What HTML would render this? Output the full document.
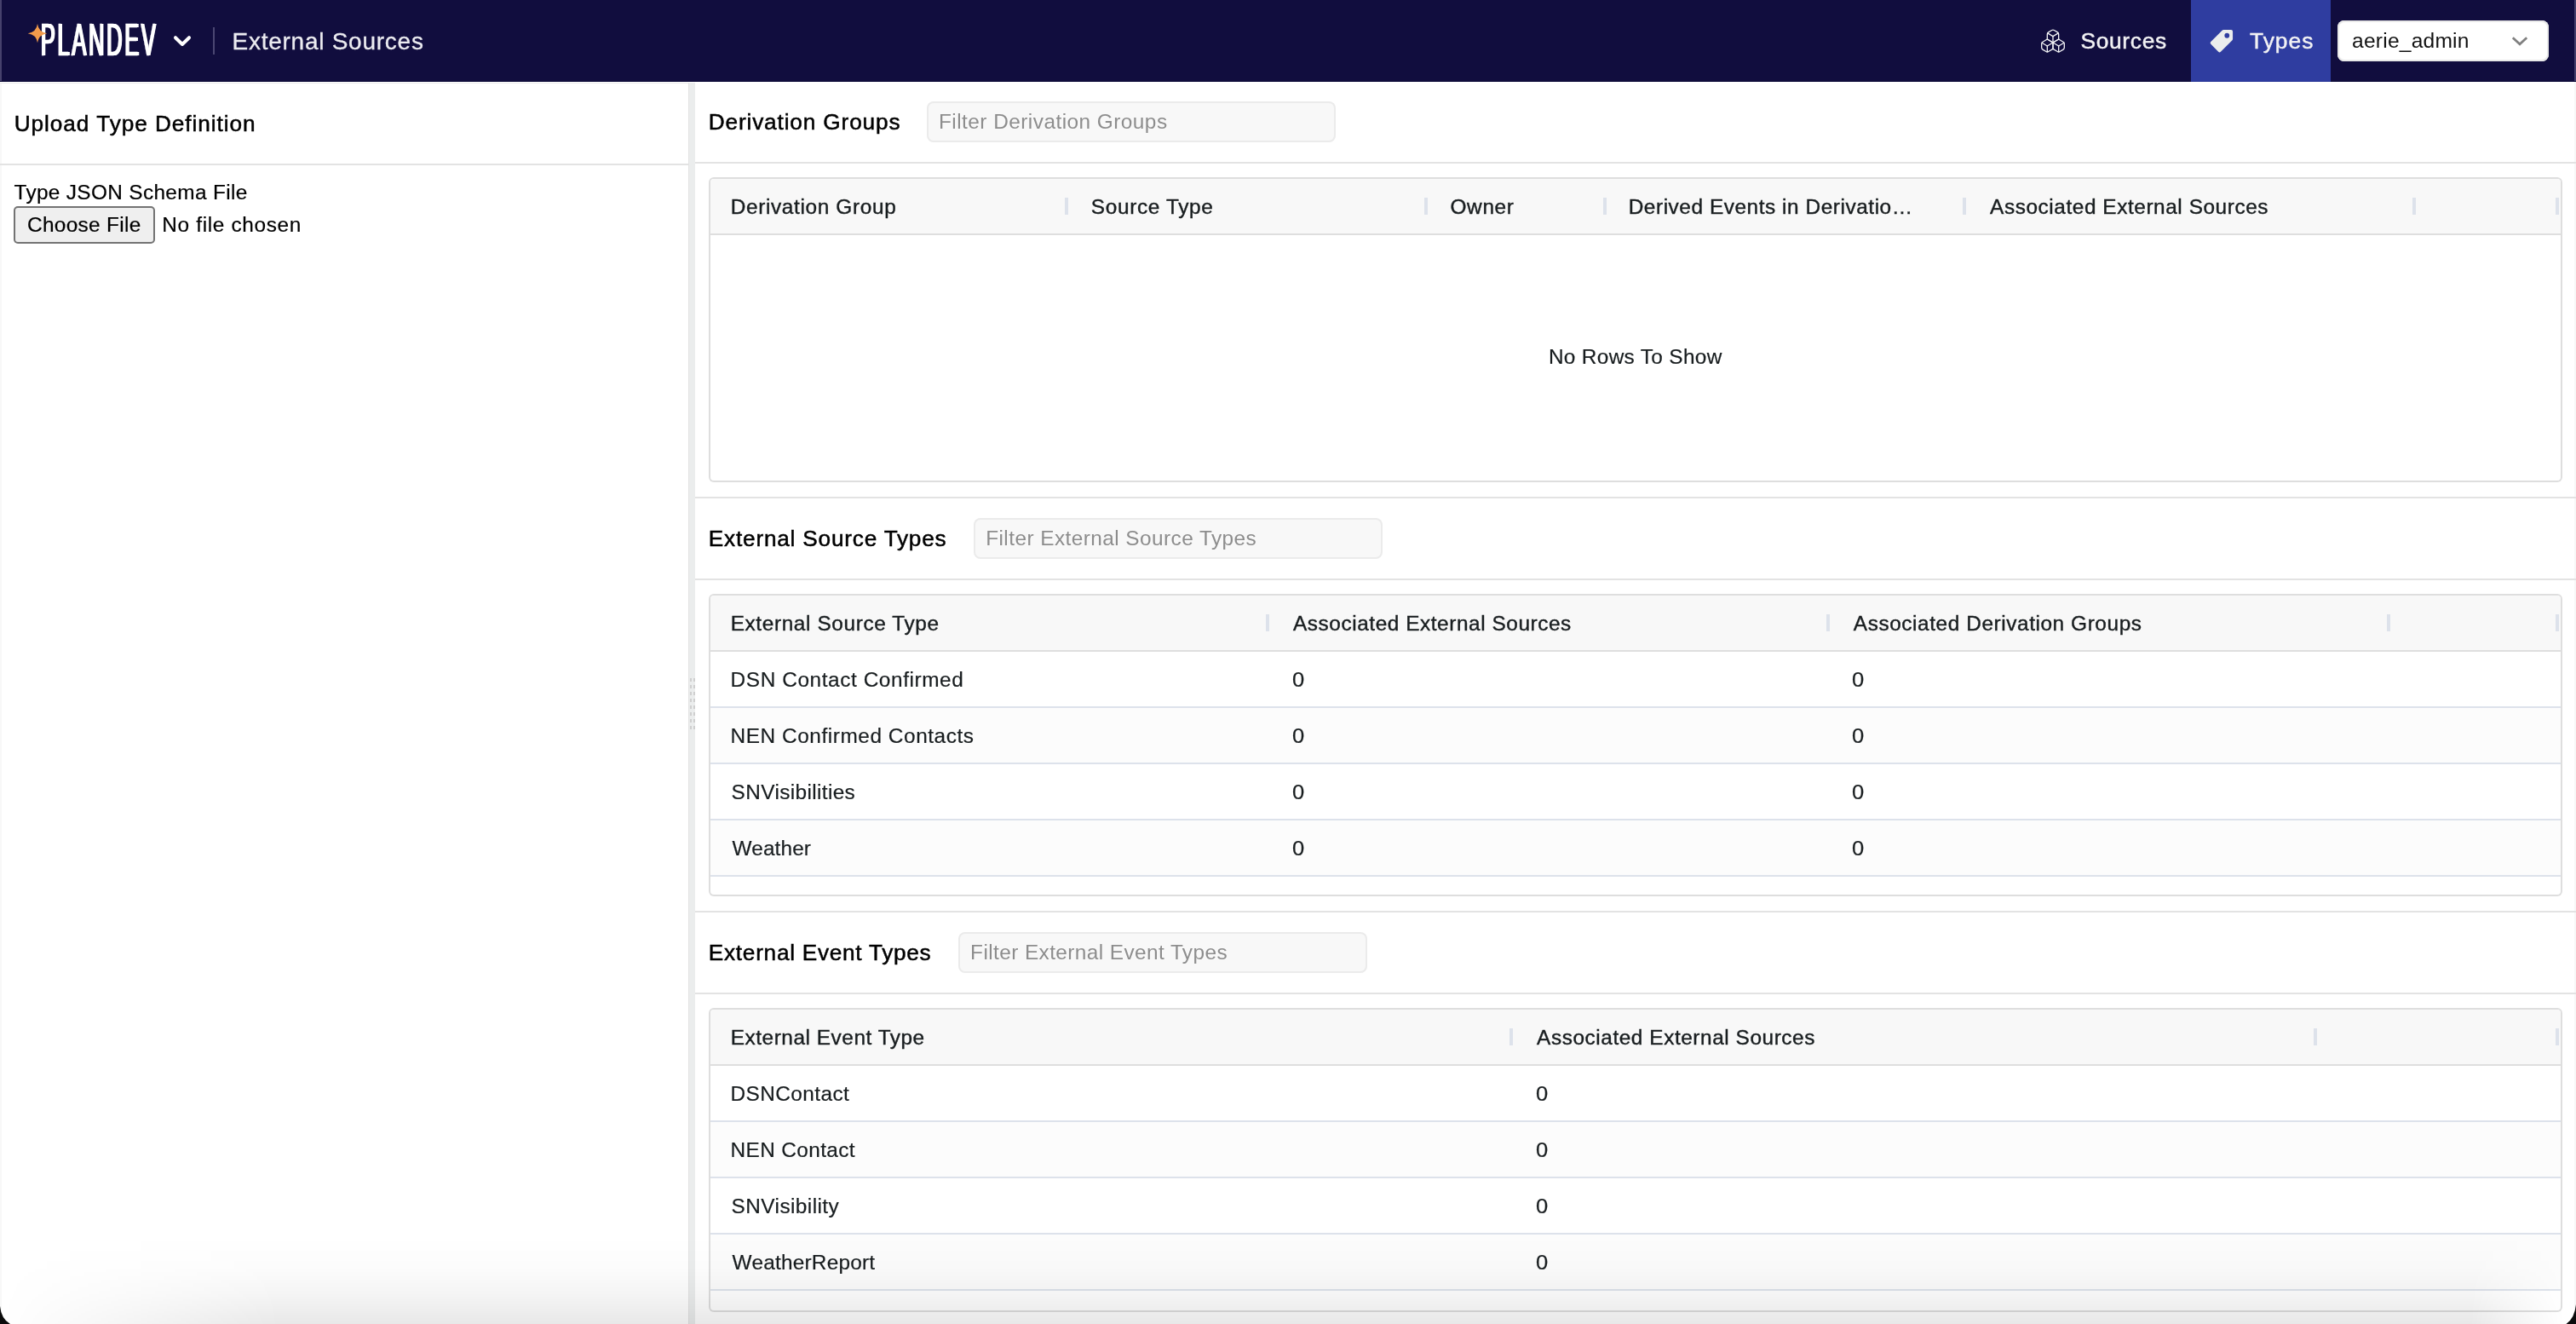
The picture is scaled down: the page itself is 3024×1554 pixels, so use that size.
<!DOCTYPE html>
<html lang="en">
<head>
<meta charset="utf-8">
<title>External Sources</title>
<style>
html,body{margin:0;padding:0;}
body{width:3024px;height:1554px;position:relative;overflow:hidden;background:#fff;will-change:transform;font-family:"Liberation Sans",sans-serif;}
.r{position:absolute;box-sizing:border-box;}
.t{position:absolute;margin:0;padding:0;white-space:pre;line-height:1em;font-weight:400;font-style:normal;text-decoration:none;font-family:"Liberation Sans",sans-serif;}
svg{position:absolute;overflow:visible;}
</style>
</head>
<body>
<header>
<div class="r" style="left:0px;top:0px;width:3024px;height:96px;background:#110d3e;"></div>
<div class="r" style="left:0px;top:0px;width:2px;height:96px;background:#46416c;"></div>
<div class="r" style="left:3022px;top:0px;width:2px;height:96px;background:#443f6a;"></div>
<div class="r" style="left:2572px;top:0px;width:164px;height:96px;background:#2f3da0;"></div>
<div class="r" style="left:0px;top:95px;width:3024px;height:1px;background:#03002f;"></div>
<div class="r" style="left:2572px;top:95px;width:164px;height:1px;background:#1f2e93;"></div>
<div class="brand">
<span class="t" id="logo" style="left:46.9px;top:19.9px;font-size:54.4px;font-weight:400;color:#fff;letter-spacing:5.6px;-webkit-text-stroke:0.5px #fff;text-shadow:1.3px 0 0 #fff,2.6px 0 0 #fff,3.7px 0 0 #fff;transform-origin:0 0;transform:scaleX(0.47);">PLANDEV</span>
<svg style="left:30px;top:25px" width="28" height="28" viewBox="30 25 28 28"><path d="M44 28.1 Q45.3 37.9 55.3 39.2 Q45.3 40.5 44 50.3 Q42.7 40.5 32.7 39.2 Q42.7 37.9 44 28.1Z" fill="#f19a4b"/></svg>
<svg style="left:200px;top:38px" width="28" height="20" viewBox="200 38 28 20"><polyline points="206,44.2 214,52 222,44.2" fill="none" stroke="#fff" stroke-width="4" stroke-linecap="round" stroke-linejoin="round"/></svg>
</div>
<div class="r" style="left:250px;top:32px;width:2px;height:32px;background:#4b4772;"></div>
<h1 class="t" id="nav_title" style="left:272.50px;top:35.30px;font-size:28px;color:#ececf1;letter-spacing:0.745px;-webkit-text-stroke:0.3px #ececf1;">External Sources</h1>
<nav>
<svg style="left:2394px;top:32px" width="32" height="32" viewBox="0 0 24 24" fill="none" stroke="#f2f2f5" stroke-width="1" stroke-linecap="round" stroke-linejoin="round"><path d="M2.97 12.92A2 2 0 0 0 2 14.63v3.24a2 2 0 0 0 .97 1.71l3 1.8a2 2 0 0 0 2.06 0L12 19v-5.5l-5-3-4.03 2.42Z"/><path d="m7 16.5-4.74-2.85"/><path d="m7 16.5 5-3"/><path d="M7 16.5v5.17"/><path d="M12 13.5V19l3.97 2.38a2 2 0 0 0 2.06 0l3-1.8a2 2 0 0 0 .97-1.71v-3.24a2 2 0 0 0-.97-1.71L17 10.5l-5 3Z"/><path d="m17 16.5-5-3"/><path d="m17 16.5 4.74-2.85"/><path d="M17 16.5v5.17"/><path d="M7.97 4.42A2 2 0 0 0 7 6.13v4.37l5 3 5-3V6.13a2 2 0 0 0-.97-1.71l-3-1.8a2 2 0 0 0-2.06 0l-3 1.8Z"/><path d="M12 8 7.26 5.15"/><path d="m12 8 4.74-2.85"/><path d="M12 13.5V8"/></svg>
<a class="t" id="nav_sources" style="left:2442.40px;top:35.12px;font-size:26.4px;color:#f2f2f4;letter-spacing:0.663px;-webkit-text-stroke:0.45px #f2f2f4;">Sources</a>
<svg style="left:2592px;top:32.9px" width="31" height="31" viewBox="0 0 16 16"><g transform="translate(16,0) scale(-1,1)"><path fill="#ebeded" d="M2 1a1 1 0 0 0-1 1v4.586a1 1 0 0 0 .293.707l7 7a1 1 0 0 0 1.414 0l4.586-4.586a1 1 0 0 0 0-1.414l-7-7A1 1 0 0 0 6.586 1H2zm4 3.5a1.5 1.5 0 1 1-3 0 1.5 1.5 0 0 1 3 0z"/></g></svg>
<a class="t" id="nav_types" aria-current="page" style="left:2641.00px;top:35.05px;font-size:26.4px;color:#f2f2f4;letter-spacing:1.000px;-webkit-text-stroke:0.45px #f2f2f4;">Types</a>
</nav>
<div role="combobox" aria-label="User role">
<div class="r" style="left:2744px;top:24px;width:248px;height:48px;background:#fff;border-radius:8px;box-shadow:inset 0 0 0 2px #e9e9e9;"></div>
<span class="t" id="nav_user" style="left:2761.10px;top:35.58px;font-size:24.6px;color:#111;letter-spacing:0.200px;">aerie_admin</span>
<svg style="left:2944px;top:38px" width="28" height="20" viewBox="2944 38 28 20"><polyline points="2949.8,44.2 2958,51.8 2966.2,44.2" fill="none" stroke="#808080" stroke-width="2.7" stroke-linecap="butt" stroke-linejoin="miter"/></svg>
</div>
</header>
<aside>
<div class="r" style="left:0px;top:98px;width:2px;height:1456px;background:#f8f8f8;"></div>
<div class="r" style="left:0px;top:96.5px;width:808px;height:1.5px;background:#e9e9e9;"></div>
<div class="r" style="left:0px;top:192px;width:808px;height:2px;background:#e3e3e3;"></div>
<h2 class="t" id="l_title" style="left:16.70px;top:132.36px;font-size:26.2px;color:#000;letter-spacing:0.951px;-webkit-text-stroke:0.5px #000;">Upload Type Definition</h2>
<label class="t" id="l_label" style="left:16.50px;top:213.55px;font-size:24.4px;color:#000;letter-spacing:0.335px;-webkit-text-stroke:0.2px #000;">Type JSON Schema File</label>
<div class="r" style="left:16px;top:242px;width:166px;height:44px;background:#efefef;border-radius:5px;box-shadow:inset 0 0 0 2px #737373;"></div>
<span class="t" id="l_btn" role="button" style="left:32.10px;top:252.18px;font-size:24.4px;color:#000;letter-spacing:0.300px;-webkit-text-stroke:0.2px #000;">Choose File</span>
<span class="t" id="l_nofile" style="left:190.30px;top:252.15px;font-size:24.4px;color:#000;letter-spacing:0.658px;-webkit-text-stroke:0.2px #000;">No file chosen</span>
</aside>
<div role="separator" aria-orientation="vertical">
<div class="r" style="left:808px;top:97px;width:8px;height:1457px;background:#ebeded;"></div>
<div class="r" style="left:808px;top:97px;width:1px;height:1457px;background:#e3e3e3;"></div>
<svg style="left:808px;top:790px" width="8" height="72" viewBox="808 790 8 72" fill="#cfcfcf"><rect x="810" y="796" width="2" height="4"/><rect x="814" y="796" width="2" height="4"/><rect x="810" y="804" width="2" height="4"/><rect x="814" y="804" width="2" height="4"/><rect x="810" y="812" width="2" height="4"/><rect x="814" y="812" width="2" height="4"/><rect x="810" y="820" width="2" height="4"/><rect x="814" y="820" width="2" height="4"/><rect x="810" y="828" width="2" height="4"/><rect x="814" y="828" width="2" height="4"/><rect x="810" y="836" width="2" height="4"/><rect x="814" y="836" width="2" height="4"/><rect x="810" y="844" width="2" height="4"/><rect x="814" y="844" width="2" height="4"/><rect x="810" y="852" width="2" height="4"/><rect x="814" y="852" width="2" height="4"/></svg>
</div>
<main>
<div class="r" style="left:3022px;top:96px;width:2px;height:1458px;background:#f7f7f7;"></div>
<section>
<div class="r" style="left:816px;top:190px;width:2208px;height:2px;background:#e3e3e3;"></div>
<h2 class="t" id="s1_title" style="left:831.70px;top:130.32px;font-size:26.2px;color:#000;letter-spacing:0.861px;-webkit-text-stroke:0.5px #000;">Derivation Groups</h2>
<div class="r" role="searchbox" style="left:1088px;top:119px;width:480px;height:48px;background:#f8f8f8;border-radius:8px;box-shadow:inset 0 0 0 2px #ebebeb;"></div>
<span class="t" id="s1_ph" style="left:1102.00px;top:131.15px;font-size:24.4px;color:#8d8d8d;letter-spacing:0.458px;">Filter Derivation Groups</span>
<div role="grid" aria-label="Derivation Groups">
<div class="r" style="left:832px;top:208px;width:2176px;height:358px;border-radius:6px;background:#fff;box-shadow:inset 0 0 0 2px #dedede;overflow:hidden;">
<div class="r" style="left:2px;top:2px;width:2172px;height:64px;background:#f8f8f8;border-radius:4px 4px 0 0;"></div>
<div class="r" style="left:2px;top:66px;width:2172px;height:2px;background:#dedede;"></div>
<div class="r" style="left:418px;top:24px;width:4px;height:20px;background:#dde2eb;"></div>
<div class="r" style="left:840px;top:24px;width:4px;height:20px;background:#dde2eb;"></div>
<div class="r" style="left:1050px;top:24px;width:4px;height:20px;background:#dde2eb;"></div>
<div class="r" style="left:1472px;top:24px;width:4px;height:20px;background:#dde2eb;"></div>
<div class="r" style="left:2000px;top:24px;width:4px;height:20px;background:#dde2eb;"></div>
<div class="r" style="left:2168px;top:24px;width:4px;height:20px;background:#dde2eb;"></div>
</div>
<div role="row">
<span class="t" id="t1_h1" role="columnheader" style="left:857.70px;top:230.95px;font-size:24.4px;color:#181d1f;letter-spacing:0.643px;-webkit-text-stroke:0.4px #181d1f;">Derivation Group</span>
<span class="t" id="t1_h2" role="columnheader" style="left:1280.80px;top:230.97px;font-size:24.4px;color:#181d1f;letter-spacing:0.660px;-webkit-text-stroke:0.4px #181d1f;">Source Type</span>
<span class="t" id="t1_h3" role="columnheader" style="left:1702.50px;top:230.98px;font-size:24.4px;color:#181d1f;letter-spacing:0.650px;-webkit-text-stroke:0.4px #181d1f;">Owner</span>
<span class="t" id="t1_h4" role="columnheader" style="left:1911.70px;top:230.95px;font-size:24.4px;color:#181d1f;letter-spacing:0.551px;-webkit-text-stroke:0.4px #181d1f;">Derived Events in Derivatio…</span>
<span class="t" id="t1_h5" role="columnheader" style="left:2336.10px;top:230.95px;font-size:24.4px;color:#181d1f;letter-spacing:0.560px;-webkit-text-stroke:0.4px #181d1f;">Associated External Sources</span>
</div>
<span class="t" id="t1_empty" style="left:1817.90px;top:406.75px;font-size:24.4px;color:#181d1f;letter-spacing:0.326px;-webkit-text-stroke:0.2px #181d1f;">No Rows To Show</span>
</div>
<div class="r" style="left:816px;top:583px;width:2208px;height:2px;background:#e3e3e3;"></div>
</section>
<section>
<div class="r" style="left:816px;top:679px;width:2208px;height:2px;background:#e3e3e3;"></div>
<h2 class="t" id="s2_title" style="left:831.80px;top:619.32px;font-size:26.2px;color:#000;letter-spacing:0.795px;-webkit-text-stroke:0.5px #000;">External Source Types</h2>
<div class="r" role="searchbox" style="left:1143px;top:608px;width:480px;height:48px;background:#f8f8f8;border-radius:8px;box-shadow:inset 0 0 0 2px #ebebeb;"></div>
<span class="t" id="s2_ph" style="left:1157.20px;top:620.15px;font-size:24.4px;color:#8d8d8d;letter-spacing:0.432px;">Filter External Source Types</span>
<div role="grid" aria-label="External Source Types">
<div class="r" style="left:832px;top:697px;width:2176px;height:355px;border-radius:6px;background:#fff;box-shadow:inset 0 0 0 2px #dedede;overflow:hidden;">
<div class="r" style="left:2px;top:2px;width:2172px;height:64px;background:#f8f8f8;border-radius:4px 4px 0 0;"></div>
<div class="r" style="left:2px;top:66px;width:2172px;height:2px;background:#dedede;"></div>
<div class="r" style="left:654px;top:24px;width:4px;height:20px;background:#dde2eb;"></div>
<div class="r" style="left:1312px;top:24px;width:4px;height:20px;background:#dde2eb;"></div>
<div class="r" style="left:1970px;top:24px;width:4px;height:20px;background:#dde2eb;"></div>
<div class="r" style="left:2168px;top:24px;width:4px;height:20px;background:#dde2eb;"></div>
<div class="r" style="left:2px;top:68px;width:2172px;height:64px;background:#fff;"></div>
<div class="r" style="left:2px;top:132px;width:2172px;height:2px;background:#dde2eb;"></div>
<div class="r" style="left:2px;top:134px;width:2172px;height:64px;background:#fcfcfc;"></div>
<div class="r" style="left:2px;top:198px;width:2172px;height:2px;background:#dde2eb;"></div>
<div class="r" style="left:2px;top:200px;width:2172px;height:64px;background:#fff;"></div>
<div class="r" style="left:2px;top:264px;width:2172px;height:2px;background:#dde2eb;"></div>
<div class="r" style="left:2px;top:266px;width:2172px;height:64px;background:#fcfcfc;"></div>
<div class="r" style="left:2px;top:330px;width:2172px;height:2px;background:#dde2eb;"></div>
</div>
<div role="row">
<span class="t" id="t2_h1" role="columnheader" style="left:857.70px;top:719.95px;font-size:24.4px;color:#181d1f;letter-spacing:0.610px;-webkit-text-stroke:0.4px #181d1f;">External Source Type</span>
<span class="t" id="t2_h2" role="columnheader" style="left:1518.00px;top:719.95px;font-size:24.4px;color:#181d1f;letter-spacing:0.556px;-webkit-text-stroke:0.4px #181d1f;">Associated External Sources</span>
<span class="t" id="t2_h3" role="columnheader" style="left:2175.80px;top:719.95px;font-size:24.4px;color:#181d1f;letter-spacing:0.575px;-webkit-text-stroke:0.4px #181d1f;">Associated Derivation Groups</span>
</div>
<div role="row">
<span class="t" id="t2_r0_c1" role="gridcell" style="left:857.60px;top:785.95px;font-size:24.4px;color:#181d1f;letter-spacing:0.580px;-webkit-text-stroke:0.2px #181d1f;">DSN Contact Confirmed</span>
<span class="t" id="t2_r0_c2" role="gridcell" style="left:1516.50px;top:786.03px;font-size:24.4px;color:#181d1f;-webkit-text-stroke:0.2px #181d1f;transform:scaleX(1.05);transform-origin:0 50%;">0</span>
<span class="t" id="t2_r0_c3" role="gridcell" style="left:2173.70px;top:786.07px;font-size:24.4px;color:#181d1f;-webkit-text-stroke:0.2px #181d1f;transform:scaleX(1.05);transform-origin:0 50%;">0</span>
</div>
<div role="row">
<span class="t" id="t2_r1_c1" role="gridcell" style="left:857.60px;top:851.95px;font-size:24.4px;color:#181d1f;letter-spacing:0.550px;-webkit-text-stroke:0.2px #181d1f;">NEN Confirmed Contacts</span>
<span class="t" id="t2_r1_c2" role="gridcell" style="left:1516.50px;top:852.03px;font-size:24.4px;color:#181d1f;-webkit-text-stroke:0.2px #181d1f;transform:scaleX(1.05);transform-origin:0 50%;">0</span>
<span class="t" id="t2_r1_c3" role="gridcell" style="left:2173.70px;top:852.07px;font-size:24.4px;color:#181d1f;-webkit-text-stroke:0.2px #181d1f;transform:scaleX(1.05);transform-origin:0 50%;">0</span>
</div>
<div role="row">
<span class="t" id="t2_r2_c1" role="gridcell" style="left:858.60px;top:917.97px;font-size:24.4px;color:#181d1f;letter-spacing:0.360px;-webkit-text-stroke:0.2px #181d1f;">SNVisibilities</span>
<span class="t" id="t2_r2_c2" role="gridcell" style="left:1516.50px;top:918.03px;font-size:24.4px;color:#181d1f;-webkit-text-stroke:0.2px #181d1f;transform:scaleX(1.05);transform-origin:0 50%;">0</span>
<span class="t" id="t2_r2_c3" role="gridcell" style="left:2173.70px;top:918.07px;font-size:24.4px;color:#181d1f;-webkit-text-stroke:0.2px #181d1f;transform:scaleX(1.05);transform-origin:0 50%;">0</span>
</div>
<div role="row">
<span class="t" id="t2_r3_c1" role="gridcell" style="left:859.60px;top:983.95px;font-size:24.4px;color:#181d1f;letter-spacing:0.098px;-webkit-text-stroke:0.2px #181d1f;">Weather</span>
<span class="t" id="t2_r3_c2" role="gridcell" style="left:1516.50px;top:984.03px;font-size:24.4px;color:#181d1f;-webkit-text-stroke:0.2px #181d1f;transform:scaleX(1.05);transform-origin:0 50%;">0</span>
<span class="t" id="t2_r3_c3" role="gridcell" style="left:2173.70px;top:984.07px;font-size:24.4px;color:#181d1f;-webkit-text-stroke:0.2px #181d1f;transform:scaleX(1.05);transform-origin:0 50%;">0</span>
</div>
</div>
<div class="r" style="left:816px;top:1069px;width:2208px;height:2px;background:#e3e3e3;"></div>
</section>
<section>
<div class="r" style="left:816px;top:1165px;width:2208px;height:2px;background:#e3e3e3;"></div>
<h2 class="t" id="s3_title" style="left:831.80px;top:1105.32px;font-size:26.2px;color:#000;letter-spacing:0.733px;-webkit-text-stroke:0.5px #000;">External Event Types</h2>
<div class="r" role="searchbox" style="left:1125px;top:1094px;width:480px;height:48px;background:#f8f8f8;border-radius:8px;box-shadow:inset 0 0 0 2px #ebebeb;"></div>
<span class="t" id="s3_ph" style="left:1139.10px;top:1106.15px;font-size:24.4px;color:#8d8d8d;letter-spacing:0.404px;">Filter External Event Types</span>
<div role="grid" aria-label="External Event Types">
<div class="r" style="left:832px;top:1183px;width:2176px;height:357px;border-radius:6px;background:#fff;box-shadow:inset 0 0 0 2px #dedede;overflow:hidden;">
<div class="r" style="left:2px;top:2px;width:2172px;height:64px;background:#f8f8f8;border-radius:4px 4px 0 0;"></div>
<div class="r" style="left:2px;top:66px;width:2172px;height:2px;background:#dedede;"></div>
<div class="r" style="left:940px;top:24px;width:4px;height:20px;background:#dde2eb;"></div>
<div class="r" style="left:1884px;top:24px;width:4px;height:20px;background:#dde2eb;"></div>
<div class="r" style="left:2168px;top:24px;width:4px;height:20px;background:#dde2eb;"></div>
<div class="r" style="left:2px;top:68px;width:2172px;height:64px;background:#fff;"></div>
<div class="r" style="left:2px;top:132px;width:2172px;height:2px;background:#dde2eb;"></div>
<div class="r" style="left:2px;top:134px;width:2172px;height:64px;background:#fcfcfc;"></div>
<div class="r" style="left:2px;top:198px;width:2172px;height:2px;background:#dde2eb;"></div>
<div class="r" style="left:2px;top:200px;width:2172px;height:64px;background:#fff;"></div>
<div class="r" style="left:2px;top:264px;width:2172px;height:2px;background:#dde2eb;"></div>
<div class="r" style="left:2px;top:266px;width:2172px;height:64px;background:#fcfcfc;"></div>
<div class="r" style="left:2px;top:330px;width:2172px;height:2px;background:#dde2eb;"></div>
</div>
<div role="row">
<span class="t" id="t3_h1" role="columnheader" style="left:857.70px;top:1205.95px;font-size:24.4px;color:#181d1f;letter-spacing:0.534px;-webkit-text-stroke:0.4px #181d1f;">External Event Type</span>
<span class="t" id="t3_h2" role="columnheader" style="left:1804.10px;top:1205.95px;font-size:24.4px;color:#181d1f;letter-spacing:0.557px;-webkit-text-stroke:0.4px #181d1f;">Associated External Sources</span>
</div>
<div role="row">
<span class="t" id="t3_r0_c1" role="gridcell" style="left:857.60px;top:1271.95px;font-size:24.4px;color:#181d1f;letter-spacing:0.402px;-webkit-text-stroke:0.2px #181d1f;">DSNContact</span>
<span class="t" id="t3_r0_c2" role="gridcell" style="left:1802.50px;top:1272.03px;font-size:24.4px;color:#181d1f;-webkit-text-stroke:0.2px #181d1f;transform:scaleX(1.05);transform-origin:0 50%;">0</span>
</div>
<div role="row">
<span class="t" id="t3_r1_c1" role="gridcell" style="left:857.60px;top:1337.95px;font-size:24.4px;color:#181d1f;letter-spacing:0.360px;-webkit-text-stroke:0.2px #181d1f;">NEN Contact</span>
<span class="t" id="t3_r1_c2" role="gridcell" style="left:1802.50px;top:1338.03px;font-size:24.4px;color:#181d1f;-webkit-text-stroke:0.2px #181d1f;transform:scaleX(1.05);transform-origin:0 50%;">0</span>
</div>
<div role="row">
<span class="t" id="t3_r2_c1" role="gridcell" style="left:858.60px;top:1403.97px;font-size:24.4px;color:#181d1f;letter-spacing:0.414px;-webkit-text-stroke:0.2px #181d1f;">SNVisibility</span>
<span class="t" id="t3_r2_c2" role="gridcell" style="left:1802.50px;top:1404.03px;font-size:24.4px;color:#181d1f;-webkit-text-stroke:0.2px #181d1f;transform:scaleX(1.05);transform-origin:0 50%;">0</span>
</div>
<div role="row">
<span class="t" id="t3_r3_c1" role="gridcell" style="left:859.60px;top:1469.95px;font-size:24.4px;color:#181d1f;letter-spacing:0.215px;-webkit-text-stroke:0.2px #181d1f;">WeatherReport</span>
<span class="t" id="t3_r3_c2" role="gridcell" style="left:1802.50px;top:1470.03px;font-size:24.4px;color:#181d1f;-webkit-text-stroke:0.2px #181d1f;transform:scaleX(1.05);transform-origin:0 50%;">0</span>
</div>
</div>
</section>
</main>
<div class="r" aria-hidden="true" style="left:0;top:1450px;width:3024px;height:104px;background:linear-gradient(to bottom,rgba(0,0,0,0) 0%,rgba(0,0,0,0.012) 35%,rgba(0,0,0,0.04) 65%,rgba(0,0,0,0.09) 100%);-webkit-mask-image:linear-gradient(to right,transparent 0,#000 330px,#000 2900px,transparent 3010px);mask-image:linear-gradient(to right,transparent 0,#000 330px,#000 2900px,transparent 3010px);"></div>
<svg aria-hidden="true" style="left:0;top:1524px" width="3024" height="30" viewBox="0 1524 3024 30"><path d="M0 1533 Q1.5 1548 12 1554 L0 1554Z" fill="#0b0b0c"/><path d="M3024 1531 Q3022.5 1547 3012.5 1554 L3024 1554Z" fill="#0b0b0c"/></svg>
<script>
(function(){var w=window.innerWidth||document.documentElement.clientWidth;if(w&&Math.abs(w-3024)>4){document.documentElement.style.zoom=String(w/3024);}})();
</script>
</body>
</html>
